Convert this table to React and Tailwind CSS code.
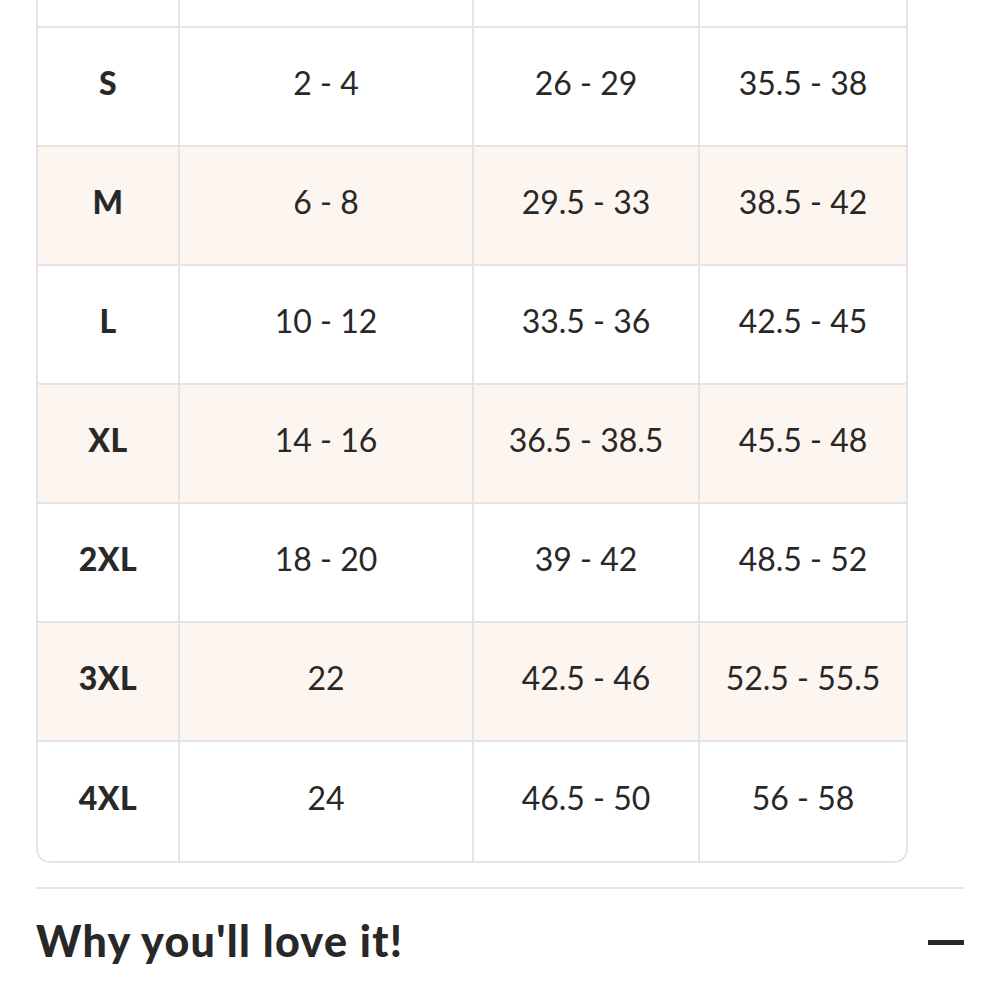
import React from "react";

const rows = [
  { size: "S", us: "2 - 4", waist: "26 - 29", hip: "35.5 - 38" },
  { size: "M", us: "6 - 8", waist: "29.5 - 33", hip: "38.5 - 42" },
  { size: "L", us: "10 - 12", waist: "33.5 - 36", hip: "42.5 - 45" },
  { size: "XL", us: "14 - 16", waist: "36.5 - 38.5", hip: "45.5 - 48" },
  { size: "2XL", us: "18 - 20", waist: "39 - 42", hip: "48.5 - 52" },
  { size: "3XL", us: "22", waist: "42.5 - 46", hip: "52.5 - 55.5" },
  { size: "4XL", us: "24", waist: "46.5 - 50", hip: "56 - 58" },
];

function Cell({ children, bold, last, bottom }) {
  return (
    <div
      className={
        "flex items-center justify-center h-[119px] pb-2 border-[#e5e3e3] " +
        (last ? "" : "border-r-2 ") +
        (bottom ? "" : "border-b-2 ") +
        (bold ? "font-black tracking-[0.5px]" : "font-normal")
      }
    >
      {children}
    </div>
  );
}

export default function App() {
  return (
    <div className="w-[1000px] h-[1000px] overflow-hidden bg-white px-9 text-[#282828] font-['Lato',sans-serif]">
      <div className="w-[872px] border-2 border-t-0 border-[#e5e3e3] rounded-b-[14px] overflow-hidden text-[32px]">
        <div className="grid grid-cols-[142px_294px_226px_206px] h-[28px]">
          <div className="border-r-2 border-b-2 border-[#e5e3e3]" />
          <div className="border-r-2 border-b-2 border-[#e5e3e3]" />
          <div className="border-r-2 border-b-2 border-[#e5e3e3]" />
          <div className="border-b-2 border-[#e5e3e3]" />
        </div>
        {rows.map((r, i) => {
          const bottom = i === rows.length - 1;
          return (
            <div
              key={r.size}
              className={
                "grid grid-cols-[142px_294px_226px_206px] " +
                (i % 2 === 1 ? "bg-[#fdf5ef]" : "bg-white")
              }
            >
              <Cell bold bottom={bottom}>{r.size}</Cell>
              <Cell bottom={bottom}>{r.us}</Cell>
              <Cell bottom={bottom}>{r.waist}</Cell>
              <Cell bottom={bottom} last>{r.hip}</Cell>
            </div>
          );
        })}
      </div>

      <div className="mt-6 h-[2px] w-[928px] bg-[#e8e6e6]" />

      <div className="flex items-center justify-between w-[928px] pt-[30px]">
        <h2 className="text-[43px] font-black leading-none tracking-[1.3px]">
          Why you'll love it!
        </h2>
        <span className="block w-9 h-[5px] bg-[#282828] mt-[4px]" />
      </div>
    </div>
  );
}
